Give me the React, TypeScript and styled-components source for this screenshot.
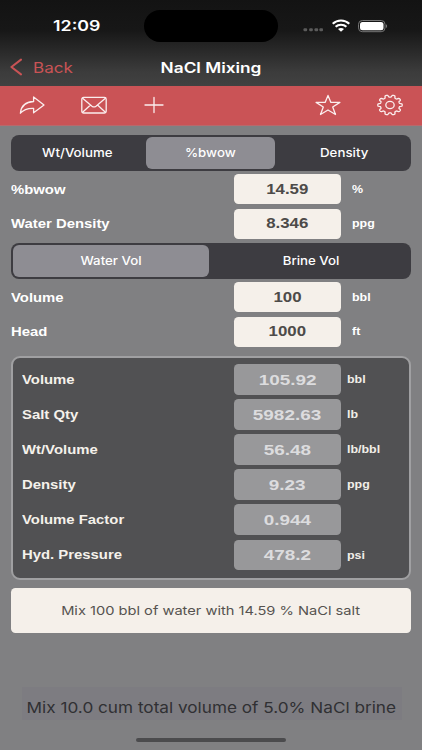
import React from "react";
import styled, { createGlobalStyle } from "styled-components";

const GlobalStyle = createGlobalStyle`
  * { box-sizing: border-box; }
  html, body { margin: 0; padding: 0; background: #808082; }
`;

const sans = `Inter, "Liberation Sans", sans-serif`;
const helvetica = `"Liberation Sans", Arial, sans-serif`;

const Screen = styled.main`
  width: 422px;
  height: 750px;
  overflow: hidden;
  display: flex;
  flex-direction: column;
  background: #808082;
  color: #fff;
`;

/* Wide lettering: glyphs are stretched horizontally from the given origin. */
const Wide = styled.span<{ $size: number; $weight?: number; $stretch?: number; $origin?: string; $helvetica?: boolean }>`
  display: inline-block;
  flex: none;
  white-space: nowrap;
  line-height: 1.2;
  padding-top: 1.6px;
  font-family: ${(p) => (p.$helvetica ? helvetica : sans)};
  font-size: ${(p) => p.$size}px;
  font-weight: ${(p) => p.$weight ?? 400};
  transform: scaleX(${(p) => p.$stretch ?? 1.22});
  transform-origin: ${(p) => p.$origin ?? "center"};
`;

const Header = styled.header`
  flex: none;
  height: 86px;
  background: linear-gradient(#131313 0, #171717 30px, #2c2c2c 54px, #3c3c3c 72px, #414141 86px);
`;

const StatusBar = styled.div`
  height: 52px;
  display: grid;
  grid-template-columns: 144px 134px 1fr;
`;

const Clock = styled.div`
  display: flex;
  justify-content: center;
  padding: 16px 0 0 10px;
`;

const Island = styled.div`
  height: 32px;
  margin-top: 10px;
  border-radius: 16px;
  background: #000;
`;

const StatusIcons = styled.div`
  display: flex;
  align-items: flex-start;
  padding: 19px 0 0 24px;
`;

const Signal = styled.svg`
  margin: 0 9px 0 -2.5px;
`;

const Battery = styled.svg`
  margin-left: 8px;
`;

const NavBar = styled.nav`
  height: 30px;
  display: grid;
  grid-template-columns: 1fr 130px 1fr;
  align-items: center;
  padding-bottom: 1px;
`;

const BackButton = styled.div`
  display: flex;
  align-items: center;
  gap: 11px;
  padding-left: 10px;
  color: #c95355;
`;

const Title = styled.div`
  display: flex;
  justify-content: center;
`;

const Toolbar = styled.div`
  flex: none;
  height: 39.5px;
  background: #ca5356;
  border-bottom: 1px solid #b8696c;
  display: flex;
  align-items: center;
  padding: 0 18px 0 18px;
`;

const Tool = styled.svg<{ $gap?: number }>`
  display: block;
  flex: none;
  margin-left: ${(p) => p.$gap ?? 0}px;
  fill: none;
  stroke: #fbeeee;
  stroke-width: 1.3;
  stroke-linecap: round;
  stroke-linejoin: round;
`;

const Content = styled.section`
  flex: 1;
  display: flex;
  flex-direction: column;
  padding: 9px 11px 0;
`;

const Segments = styled.div<{ $columns: string; $top?: number }>`
  flex: none;
  height: 36px;
  margin-top: ${(p) => p.$top ?? 0}px;
  padding: 2px;
  border-radius: 8px;
  background: #3d3c41;
  display: grid;
  grid-template-columns: ${(p) => p.$columns};
`;

const Segment = styled.div<{ $active?: boolean; $inset?: string }>`
  display: flex;
  align-items: center;
  justify-content: center;
  padding: ${(p) => p.$inset ?? "0"};
  border-radius: 6px;
  background: ${(p) => (p.$active ? "#8e8d93" : "transparent")};
`;

const Fields = styled.div<{ $top: number; $gap: number }>`
  margin-top: ${(p) => p.$top}px;
  display: flex;
  flex-direction: column;
  gap: ${(p) => p.$gap}px;
`;

const FieldRow = styled.div<{ $result?: boolean }>`
  display: grid;
  grid-template-columns: ${(p) => (p.$result ? "212px 107px 1fr" : "223px 107px 1fr")};
  align-items: center;
  height: ${(p) => (p.$result ? 30.8 : 30)}px;
`;

const Label = styled.div`
  display: flex;
`;

const ValueBox = styled.div<{ $result?: boolean }>`
  height: 100%;
  display: flex;
  align-items: center;
  justify-content: center;
  border-radius: 4.5px;
  background: ${(p) => (p.$result ? "#98989a" : "#f5f0ea")};
  color: ${(p) => (p.$result ? "#dcdcde" : "#4d4b49")};
`;

const Unit = styled.div<{ $result?: boolean }>`
  padding-left: ${(p) => (p.$result ? 6 : 11)}px;
  display: flex;
  color: ${(p) => (p.$result ? "#f2eee8" : "#fff")};
`;

const Results = styled.div`
  flex: none;
  height: 224px;
  margin-top: 9px;
  padding: 6.5px 9px 0;
  border: 2px solid #a0a0a2;
  border-radius: 9px;
  background: #515153;
  color: #f5f1eb;
`;

const Message = styled.div`
  flex: none;
  height: 44.5px;
  margin-top: 8.5px;
  display: flex;
  align-items: center;
  justify-content: center;
  border-radius: 4.5px;
  background: #f5f0ea;
  color: #565350;
`;

const Caption = styled.div`
  flex: none;
  height: 33px;
  margin: 54px 9px 0 11px;
  display: flex;
  align-items: center;
  justify-content: center;
  padding: 8px 2px 0 0;
  background: #7d7c81;
  color: #303033;
`;

const HomeIndicator = styled.div`
  flex: none;
  width: 150px;
  height: 4.5px;
  margin: 18px auto 0;
  border-radius: 3px;
  background: #4b4b4d;
`;

type Entry = { label: string; value: string; unit: string };

const mixture: Entry[] = [
  { label: "%bwow", value: "14.59", unit: "%" },
  { label: "Water Density", value: "8.346", unit: "ppg" },
];
const well: Entry[] = [
  { label: "Volume", value: "100", unit: "bbl" },
  { label: "Head", value: "1000", unit: "ft" },
];
const results: Entry[] = [
  { label: "Volume", value: "105.92", unit: "bbl" },
  { label: "Salt Qty", value: "5982.63", unit: "lb" },
  { label: "Wt/Volume", value: "56.48", unit: "lb/bbl" },
  { label: "Density", value: "9.23", unit: "ppg" },
  { label: "Volume Factor", value: "0.944", unit: "" },
  { label: "Hyd. Pressure", value: "478.2", unit: "psi" },
];

function Field({ entry, result }: { entry: Entry; result?: boolean }) {
  return (
    <FieldRow $result={result}>
      <Label>
        <Wide $helvetica $size={12.4} $stretch={1.2} $weight={700} $origin="left">{entry.label}</Wide>
      </Label>
      <ValueBox $result={result}>
        <Wide $helvetica $size={result ? 15.5 : 13.8} $weight={700}>{entry.value}</Wide>
      </ValueBox>
      <Unit $result={result}>
        <Wide $helvetica $size={10.2} $weight={700} $origin="left">{entry.unit}</Wide>
      </Unit>
    </FieldRow>
  );
}

function SegmentText({ children }: { children: string }) {
  return <Wide $size={12.2} $weight={500} $stretch={1.09}>{children}</Wide>;
}

function gearPath(cx: number, cy: number, teeth: number) {
  const points: string[] = [];
  const steps = teeth * 16;
  for (let i = 0; i < steps; i++) {
    const a = (i / steps) * Math.PI * 2;
    const wave = Math.tanh(2.6 * Math.cos(teeth * a)) / Math.tanh(2.6);
    const k = 0.895 + 0.105 * wave;
    points.push(`${(cx + 12.2 * k * Math.cos(a)).toFixed(2)} ${(cy + 10 * k * Math.sin(a)).toFixed(2)}`);
  }
  return `M${points.join("L")}Z`;
}

export default function App() {
  return (
    <Screen>
      <GlobalStyle />
      <Header>
        <StatusBar>
          <Clock><Wide $size={14.8} $weight={600} $stretch={1.2}>12:09</Wide></Clock>
          <Island />
          <StatusIcons>
            <Signal width="23" height="14" viewBox="0 0 23 14" fill="#5b5b5b">
              <rect x="3.5" y="9.2" width="3.6" height="3" rx="1" />
              <rect x="9.2" y="9.2" width="3.6" height="3" rx="1" />
              <rect x="14.5" y="9.2" width="3.6" height="3" rx="1" />
              <rect x="19.4" y="9.2" width="3.6" height="3" rx="1" />
            </Signal>
            <svg width="18" height="14" viewBox="0 0 18 14" fill="none" stroke="#fff" strokeWidth="2.1">
              <path d="M.7 4.8C5.3.4 12.7.4 17.3 4.8" />
              <path d="M3.6 7.8c2.9-2.8 7.9-2.8 10.8 0" />
              <path d="M6 10c1.7-1.5 4.3-1.5 6 0L9 12.8z" fill="#fff" stroke="none" />
            </svg>
            <Battery width="30" height="14" viewBox="0 0 30 14">
              <rect x=".5" y="1.5" width="26.5" height="11.2" rx="3.8" fill="none" stroke="#777" />
              <rect x="2" y="3" width="23.5" height="8.2" rx="2.5" fill="#fff" />
              <path d="M28 5.3c1.5.5 1.5 3.1 0 3.6z" fill="#777" />
            </Battery>
          </StatusIcons>
        </StatusBar>
        <NavBar>
          <BackButton>
            <svg width="12" height="18" viewBox="0 0 12 18" fill="none" stroke="currentColor" strokeWidth="2" strokeLinecap="round" strokeLinejoin="round">
              <path d="M11 1.6 1.4 9 11 16.4" />
            </svg>
            <Wide $size={14.3} $stretch={1.19} $origin="left">Back</Wide>
          </BackButton>
          <Title><Wide $size={14.4} $weight={600} $stretch={1.2}>NaCl Mixing</Wide></Title>
        </NavBar>
      </Header>
      <Toolbar>
        <Tool width="28" height="22" viewBox="0 0 28 22">
          <path d="M15.6 3 26 10.9 15.6 18.8v-4.5C9.3 14.1 5.5 15.4 2.4 19.2 3 12.4 7.3 7.9 15.6 7.5z" />
        </Tool>
        <Tool $gap={35} width="26" height="22" viewBox="0 0 26 22">
          <rect x=".8" y="3.4" width="24.4" height="15.6" rx="1.8" />
          <path d="M1.6 4.2 11 12.2q2 1.5 4 0l9.4-8M1.6 18.2 9.5 11M24.4 18.2 16.5 11" />
        </Tool>
        <Tool $gap={37} width="20" height="22" viewBox="0 0 20 22">
          <path d="M10 3.5v15M1 11h18" />
        </Tool>
        <Tool $gap={151} width="26" height="22" viewBox="0 0 26 22">
          <path d="m13 1.4 2.9 7h9L17.7 13l2.8 7.5L13 16l-7.5 4.5L8.3 13 1.1 8.400h9z" />
        </Tool>
        <Tool $gap={35} width="28" height="22" viewBox="0 0 28 22">
          <path d={gearPath(14, 11, 10)} />
          <ellipse cx="14" cy="11" rx="4.2" ry="3.6" />
        </Tool>
      </Toolbar>
      <Content>
        <Segments $columns="133px 129px 1fr">
          <Segment $inset="0 5px 0 0"><SegmentText>Wt/Volume</SegmentText></Segment>
          <Segment $active><SegmentText>%bwow</SegmentText></Segment>
          <Segment $inset="0 0 0 4px"><SegmentText>Density</SegmentText></Segment>
        </Segments>
        <Fields $top={3.8} $gap={4.4}>
          {mixture.map((e) => <Field key={e.label} entry={e} />)}
        </Fields>
        <Segments $top={4.2} $columns="195.5px 1fr">
          <Segment $active><SegmentText>Water Vol</SegmentText></Segment>
          <Segment $inset="0 0 0 4px"><SegmentText>Brine Vol</SegmentText></Segment>
        </Segments>
        <Fields $top={3.3} $gap={4.4}>
          {well.map((e) => <Field key={e.label} entry={e} />)}
        </Fields>
        <Results>
          <Fields $top={0} $gap={4.3}>
            {results.map((e) => <Field key={e.label} entry={e} result />)}
          </Fields>
        </Results>
        <Message><Wide $size={12.3} $stretch={1.19}>Mix 100 bbl of water with 14.59 % NaCl salt</Wide></Message>
        <Caption><Wide $size={15} $stretch={1.145}>Mix 10.0 cum total volume of 5.0% NaCl brine</Wide></Caption>
        <HomeIndicator />
      </Content>
    </Screen>
  );
}
